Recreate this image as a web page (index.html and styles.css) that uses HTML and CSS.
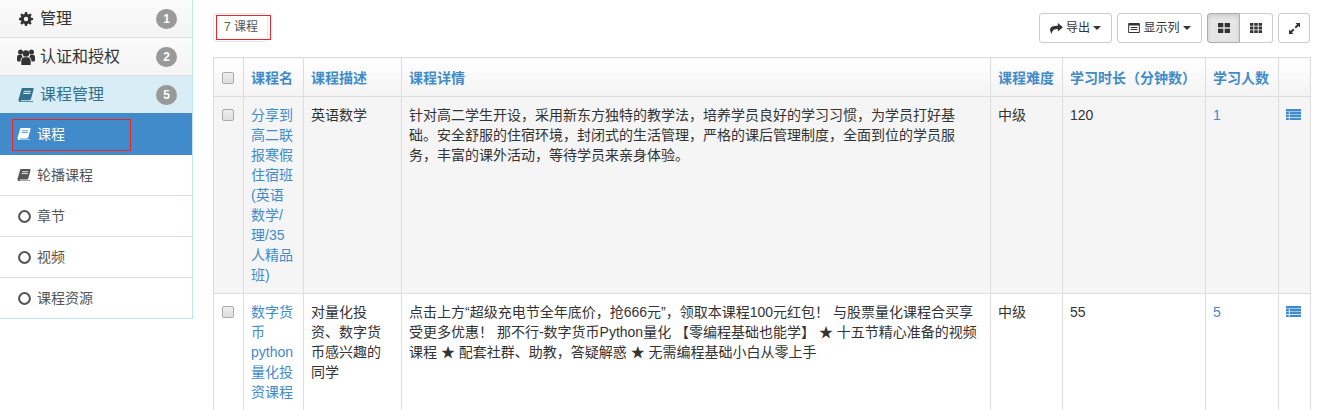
FILE: index.html
```html
<!DOCTYPE html>
<html lang="zh">
<head>
<meta charset="utf-8">
<title>课程</title>
<link rel="stylesheet" href="styles.css">
</head>
<body>
<svg class="defs" width="0" height="0">
  <symbol id="i-book" viewBox="0 0 14 12.500"><path d="M3.300 0h9.600c.7 0 1.100.5.900 1.200l-2.300 8.400c-.2.800-.7 1.300-1.500 1.300H3c-.5 0-.8.200-.8.500s.3.500.8.500h9.400l.7-.5.200.5-.4 1.100c-.1.300-.3.500-.7.500H2C.9 12.500.1 11.500.3 10.200z"/><path class="cut" d="M5 2.800h6.400M4.500 4.800h6.400"/></symbol>
  <symbol id="i-circle" viewBox="0 0 12 12"><circle cx="6" cy="6" r="5" fill="none" stroke="currentColor" stroke-width="1.900"/></symbol>
  <symbol id="i-cog" viewBox="0 0 14 14"><path d="M6 0h2l.4 2 1.300.5L11.400 1.400l1.300 1.300-1.100 1.700.6 1.300 1.800.3v2l-1.900.4-.5 1.300 1.100 1.600-1.400 1.400-1.600-1.100-1.300.6L8 14H6l-.4-1.900-1.300-.5-1.600 1.100-1.400-1.400 1.100-1.600-.6-1.300L0 8V6l1.800-.4.5-1.300-1-1.600 1.300-1.300 1.700 1 1.300-.5z"/><circle class="hole" cx="7" cy="7" r="2.200"/></symbol>
  <symbol id="i-users" viewBox="0 0 18 16"><circle cx="9" cy="4.500" r="3.200"/><circle cx="3.500" cy="3" r="2.500"/><circle cx="14.500" cy="3" r="2.500"/><path d="M4.300 16v-3.800c0-2.800 1.700-4 3-4h3.400c1.300 0 3 1.200 3 4V16z"/><path d="M0 11V8.500c0-2 1-2.700 2-2.700h2.600c.2 1 .6 1.700 1.200 2.300-1.500.8-2.300 2.200-2.300 4.400H1.500C.5 12.500 0 12 0 11zM18 11V8.500c0-2-1-2.700-2-2.700h-2.600c-.2 1-.6 1.700-1.200 2.300 1.500.8 2.300 2.200 2.300 4.400h2c1 0 1.500-.5 1.500-1.500z"/></symbol>
  <symbol id="i-share" viewBox="0 0 14 12"><path d="M8.500 0L14 4.700 8.500 9.400V6.600C5 6.600 2.500 7.200 1.800 12 .4 9.800 0 8.500 0 7.200 0 4 3.500 2.900 8.500 2.900z"/></symbol>
  <symbol id="i-listalt" viewBox="0 0 14 12"><path fill-rule="evenodd" d="M1 0h12c.6 0 1 .4 1 1v10c0 .6-.4 1-1 1H1c-.6 0-1-.4-1-1V1c0-.6.4-1 1-1zm.2 3v7.800h11.600V3z"/><path d="M3 4.800h8V6H3zM3 7.200h8v1.200H3z"/></symbol>
  <symbol id="i-thlarge" viewBox="0 0 12 10"><path d="M0 0h5.300v4.300H0zM6.700 0H12v4.300H6.700zM0 5.700h5.300V10H0zM6.700 5.700H12V10H6.700z"/></symbol>
  <symbol id="i-th" viewBox="0 0 12 10"><path d="M0 0h3.400v2.800H0zM4.300 0h3.400v2.800H4.300zM8.600 0H12v2.800H8.600zM0 3.600h3.400v2.800H0zM4.300 3.600h3.400v2.800H4.300zM8.600 3.600H12v2.800H8.600zM0 7.200h3.400V10H0zM4.300 7.200h3.400V10H4.300zM8.600 7.200H12V10H8.600z"/></symbol>
  <symbol id="i-expand" viewBox="0 0 11 11"><path d="M6.500 0H11v4.500L9.400 2.900 6.900 5.400 5.600 4.100l2.500-2.500zM4.500 11H0V6.500l1.600 1.600 2.500-2.500 1.300 1.300-2.500 2.500z"/></symbol>
  <symbol id="i-list" viewBox="0 0 15 11"><path d="M0 0h15v2.400H0zM0 2.900h2.800v2.300H0zM3.600 2.900H15v2.300H3.600zM0 5.800h2.800v2.300H0zM3.600 5.800H15v2.300H3.600zM0 8.700h2.800V11H0zM3.600 8.700H15V11H3.600z"/></symbol>
</svg>
<div class="page">
  <aside class="sidebar">
    <div class="group"><span class="gicon"><svg class="ic cog"><use href="#i-cog"/></svg></span><span class="gtitle">管理</span><span class="badge">1</span></div>
    <div class="group"><span class="gicon"><svg class="ic users"><use href="#i-users"/></svg></span><span class="gtitle">认证和授权</span><span class="badge">2</span></div>
    <div class="group open"><span class="gicon"><svg class="ic book"><use href="#i-book"/></svg></span><span class="gtitle">课程管理</span><span class="badge">5</span></div>
    <ul class="menu">
      <li class="item active"><svg class="ic mbook"><use href="#i-book"/></svg>课程<span class="mark mark-side"></span></li>
      <li class="item"><svg class="ic mbook"><use href="#i-book"/></svg>轮播课程</li>
      <li class="item"><svg class="ic circle"><use href="#i-circle"/></svg>章节</li>
      <li class="item"><svg class="ic circle"><use href="#i-circle"/></svg>视频</li>
      <li class="item"><svg class="ic circle"><use href="#i-circle"/></svg>课程资源</li>
    </ul>
  </aside>
  <main class="content">
    <div class="toolbar">
      <div class="count"><span class="num">7</span> 课程<span class="mark mark-count"></span></div>
      <div class="actions">
        <button class="btn w-export"><svg class="ic share"><use href="#i-share"/></svg>导出<span class="caret"></span></button>
        <button class="btn w-cols"><svg class="ic listalt"><use href="#i-listalt"/></svg>显示列<span class="caret"></span></button>
        <div class="btn-group">
          <button class="btn on"><svg class="ic thlarge"><use href="#i-thlarge"/></svg></button>
          <button class="btn"><svg class="ic thlarge"><use href="#i-th"/></svg></button>
        </div>
        <button class="btn solo"><svg class="ic expand"><use href="#i-expand"/></svg></button>
      </div>
    </div>
    <table class="grid">
      <colgroup>
        <col class="c-check"><col class="c-name"><col class="c-desc"><col class="c-detail"><col class="c-level"><col class="c-time"><col class="c-count"><col class="c-op">
      </colgroup>
      <thead>
        <tr>
          <th><span class="check"></span></th>
          <th>课程名</th>
          <th>课程描述</th>
          <th>课程详情</th>
          <th>课程难度</th>
          <th>学习时长（分钟数）</th>
          <th>学习人数</th>
          <th></th>
        </tr>
      </thead>
      <tbody>
        <tr class="odd">
          <td><span class="check"></span></td>
          <td class="link">分享到高二联报寒假住宿班(英语数学/理/35人精品班)</td>
          <td>英语数学</td>
          <td>针对高二学生开设，采用新东方独特的教学法，培养学员良好的学习习惯，为学员打好基础。安全舒服的住宿环境，封闭式的生活管理，严格的课后管理制度，全面到位的学员服务，丰富的课外活动，等待学员来亲身体验。</td>
          <td>中级</td>
          <td>120</td>
          <td class="link">1</td>
          <td><svg class="ic list"><use href="#i-list"/></svg></td>
        </tr>
        <tr>
          <td><span class="check"></span></td>
          <td class="link">数字货币python量化投资课程</td>
          <td>对量化投资、数字货币感兴趣的同学</td>
          <td>点击上方“超级充电节全年底价，抢666元”，领取本课程100元红包！ 与股票量化课程合买享受更多优惠！ 那不行-数字货币Python量化 【零编程基础也能学】 ★ 十五节精心准备的视频课程 ★ 配套社群、助教，答疑解惑 ★ 无需编程基础小白从零上手</td>
          <td>中级</td>
          <td>55</td>
          <td class="link">5</td>
          <td><svg class="ic list"><use href="#i-list"/></svg></td>
        </tr>
      </tbody>
    </table>
  </main>
</div>
</body>
</html>
```
FILE: styles.css
```css
* { box-sizing: border-box; }
html, body { margin: 0; height: 410px; overflow: hidden; background: #fff; }
body { font-family: "Liberation Sans", "Noto Sans CJK SC", sans-serif; font-size: 14px; line-height: 20px; color: #333; }
.defs { position: absolute; }
.page { display: flex; align-items: flex-start; height: 410px; overflow: hidden; }
.ic { display: block; fill: currentColor; flex: none; }
.cut { fill: none; stroke: var(--cut, #fff); stroke-width: .9; }
.hole { fill: #f9f9f9; }

.sidebar { width: 193px; flex: none; border-right: 1px solid #bce8f1; }
.group { display: flex; align-items: center; height: 38px; padding: 0 15px 0 0; border-bottom: 1px solid #ddd; background: linear-gradient(#fbfbfb, #f4f4f4); font-size: 16px; color: #333; }
.group.open { background: #d9edf7; color: #31708f; height: 37px; border-bottom: 0; --cut: #d9edf7; }
.gicon { width: 40px; display: flex; justify-content: center; padding-left: 11px; flex: none; }
.gtitle { flex: 1; }
.badge { width: 21px; height: 20px; border-radius: 10px; background: #999; color: #fff; font-size: 12px; font-weight: bold; line-height: 20px; text-align: center; }
.cog { width: 14px; height: 14px; }
.users { width: 18px; height: 16px; }
.book { width: 16px; height: 14px; }
.menu { list-style: none; margin: 0; padding: 0; border-bottom: 1px solid #bce8f1; }
.item { position: relative; display: flex; align-items: center; height: 41px; padding-left: 17px; font-size: 14px; color: #555; border-bottom: 1px solid #ddd; }
.item:last-child { border-bottom: 0; height: 40px; }
.item.active { background: #428bca; color: #fff; height: 42px; border-bottom: 0; --cut: #428bca; }
.mbook { width: 14px; height: 12px; margin-right: 6px; }
.circle { width: 13px; height: 13px; margin-left: 1px; margin-right: 6px; }
.mark { position: absolute; border: 1px solid #e8262c; pointer-events: none; }
.mark-side { left: 12px; top: 6px; width: 119px; height: 32px; }

.content { flex: none; width: 1097px; margin-left: 20px; }
.toolbar { display: flex; justify-content: space-between; align-items: flex-start; height: 57px; padding-top: 13px; }
.count { position: relative; height: 29px; width: 55px; padding: 3px 3px 0 10px; border: 1px solid #e7e7e7; border-radius: 3px; font-size: 12px; color: #555; white-space: nowrap; }
.num { color: #3c763d; }
.mark-count { left: 2px; top: 1px; width: 55px; height: 25px; }
.actions { display: flex; gap: 5px; }
.btn { display: flex; align-items: center; justify-content: center; height: 30px; padding: 0; background: #fff; border: 1px solid #ccc; border-radius: 3px; font: inherit; font-size: 12px; color: #333; }
.w-export { width: 73px; }
.w-cols { width: 85px; }
.btn .share { width: 13px; height: 11px; margin-right: 3px; }
.btn .listalt { width: 12px; height: 10px; margin-right: 3px; }
.caret { width: 0; height: 0; margin-left: 3px; border-left: 4px solid transparent; border-right: 4px solid transparent; border-top: 4px solid #333; }
.btn-group { display: flex; }
.btn-group .btn { width: 33px; }
.btn-group .btn:first-child { border-radius: 3px 0 0 3px; }
.btn-group .btn:last-child { border-radius: 0 3px 3px 0; border-left: 0; }
.btn.on { background: #e6e6e6; border-color: #adadad; box-shadow: inset 0 2px 4px rgba(0,0,0,.13); }
.thlarge { width: 12px; height: 10px; }
.solo { width: 32px; }
.expand { width: 11px; height: 11px; }

.grid { width: 1097px; table-layout: fixed; border-collapse: collapse; border: 1px solid #ddd; }
.c-check { width: 30px; }
.c-name { width: 60px; }
.c-desc { width: 98px; }
.c-detail { width: 589px; }
.c-level { width: 72px; }
.c-time { width: 143px; }
.c-count { width: 73px; }
.c-op { width: 32px; }
.grid th, .grid td { border: 1px solid #ddd; padding: 8px 9px 8px 7px; vertical-align: top; text-align: left; }
.grid th { height: 39px; padding-top: 10px; font-size: 14px; line-height: 20px; color: #428bca; font-weight: bold; background: linear-gradient(#fff, #f3f3f3); white-space: nowrap; }
.grid tr.odd td { background: #f5f5f5; }
.link { color: #428bca; }
.check { display: block; width: 12px; height: 12px; margin: 4px 0 0 1px; border: 1px solid #aaa; border-radius: 2px; background: linear-gradient(#eee, #ddd); box-shadow: inset 0 0 1px #fff; }
.list { width: 15px; height: 11px; color: #428bca; margin-top: 4px; --cut: #f5f5f5; }
```
